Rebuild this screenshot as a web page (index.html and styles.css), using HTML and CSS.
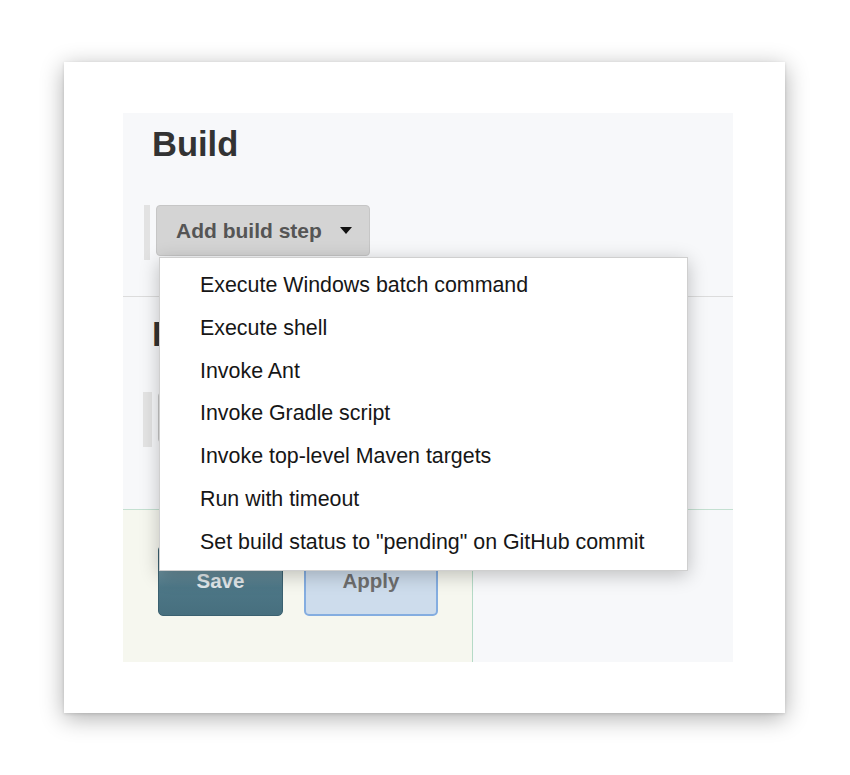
FILE: index.html
```html
<!DOCTYPE html>
<html>
<head>
<meta charset="utf-8">
<link rel="stylesheet" href="styles.css">
</head>
<body>
<div class="page">
<div class="card">
  <div class="panel">
    <section class="section build">
      <h2 class="heading">Build</h2>
      <div class="step-row">
        <span class="handle"></span>
        <button class="btn-add">Add build step <span class="caret"></span></button>
      </div>
    </section>
    <section class="section post">
      <h2 class="heading heading-post">Post-build Actions</h2>
      <div class="step-row step-row-post">
        <span class="handle handle-post"></span>
        <button class="btn-add">Add post-build action <span class="caret"></span></button>
      </div>
    </section>
    <div class="bottom">
      <div class="bottom-left">
        <button class="btn-save">Save</button>
        <button class="btn-apply">Apply</button>
      </div>
    </div>
    <ul class="menu">
      <li>Execute Windows batch command</li>
      <li>Execute shell</li>
      <li>Invoke Ant</li>
      <li>Invoke Gradle script</li>
      <li>Invoke top-level Maven targets</li>
      <li>Run with timeout</li>
      <li>Set build status to "pending" on GitHub commit</li>
    </ul>
  </div>
</div>
</div>
</body>
</html>
```

FILE: styles.css
```css
html, body {
  margin: 0;
  padding: 0;
  background: #ffffff;
  font-family: "Liberation Sans", Arial, Helvetica, sans-serif;
}

.page {
  min-height: 775px;
  padding: 62px 0 0 64px;
  box-sizing: border-box;
}

.card {
  width: 721px;
  height: 651px;
  box-sizing: border-box;
  padding: 51px 52px 51px 59px;
  background: #ffffff;
  box-shadow: 0 5px 22px rgba(0, 0, 0, 0.32), 0 1px 3px rgba(0, 0, 0, 0.12);
}

.panel {
  position: relative;
  width: 610px;
  height: 549px;
  background: #f7f8fa;
  display: flex;
  flex-direction: column;
  overflow: hidden;
}

.section {
  padding-left: 29px;
}

.build {
  height: 183px;
  border-bottom: 1px solid #dcdcdc;
  box-sizing: content-box;
}

.post {
  height: 212px;
}

.heading {
  margin: 0;
  padding-top: 11px;
  font-size: 34.5px;
  line-height: 40px;
  font-weight: bold;
  color: #333333;
}

.heading-post {
  padding-top: 17px;
}

.step-row {
  display: flex;
  align-items: flex-start;
  gap: 6px;
  margin-top: 41px;
  margin-left: -8px;
}

.step-row-post {
  margin-top: 38px;
  margin-left: -9px;
}

.handle {
  display: block;
  width: 6px;
  height: 55px;
  background: #e2e2e2;
}

.handle-post {
  width: 9px;
  background: #e4e4e4;
}

.btn-add {
  display: flex;
  align-items: center;
  height: 51px;
  box-sizing: border-box;
  padding: 0 17px 0 19px;
  border: 1px solid #c6c6c6;
  border-radius: 4px;
  background: #d4d4d4;
  color: #555555;
  font-family: "Liberation Sans", Arial, sans-serif;
  font-size: 21px;
  font-weight: bold;
  white-space: nowrap;
}

.caret {
  display: inline-block;
  margin-left: 18px;
  width: 0;
  height: 0;
  border-left: 6.5px solid transparent;
  border-right: 6.5px solid transparent;
  border-top: 7px solid #111111;
}

.bottom {
  flex: 1;
  border-top: 1px solid #c4e0d1;
  display: flex;
}

.bottom-left {
  width: 350px;
  background: #f6f7ef;
  border-right: 1px solid #b5dac6;
  display: flex;
  align-items: flex-start;
  gap: 21px;
  padding: 35px 0 0 35px;
  box-sizing: border-box;
}

.btn-save,
.btn-apply {
  height: 71px;
  border-radius: 5px;
  font-family: "Liberation Sans", Arial, sans-serif;
  font-size: 20.5px;
  font-weight: bold;
  box-sizing: border-box;
}

.btn-save {
  width: 125px;
  background: linear-gradient(#8aa7b2 0%, #6a8e9b 35%, #4d7787 60%, #476f7e 100%);
  border: 1px solid #3b6170;
  color: #e1e7ea;
}

.btn-apply {
  width: 134px;
  background: #cddcec;
  border: 2px solid #84ade0;
  color: #6e6e6e;
}

.menu {
  position: absolute;
  left: 36px;
  top: 144px;
  width: 529px;
  box-sizing: border-box;
  margin: 0;
  padding: 6px 0;
  list-style: none;
  background: #ffffff;
  border: 1px solid #cfcfcf;
  box-shadow: 0 4px 18px rgba(0, 0, 0, 0.24);
}

.menu li {
  padding-left: 40px;
  font-size: 21.4px;
  line-height: 42.8px;
  color: #161616;
  white-space: nowrap;
}
```
